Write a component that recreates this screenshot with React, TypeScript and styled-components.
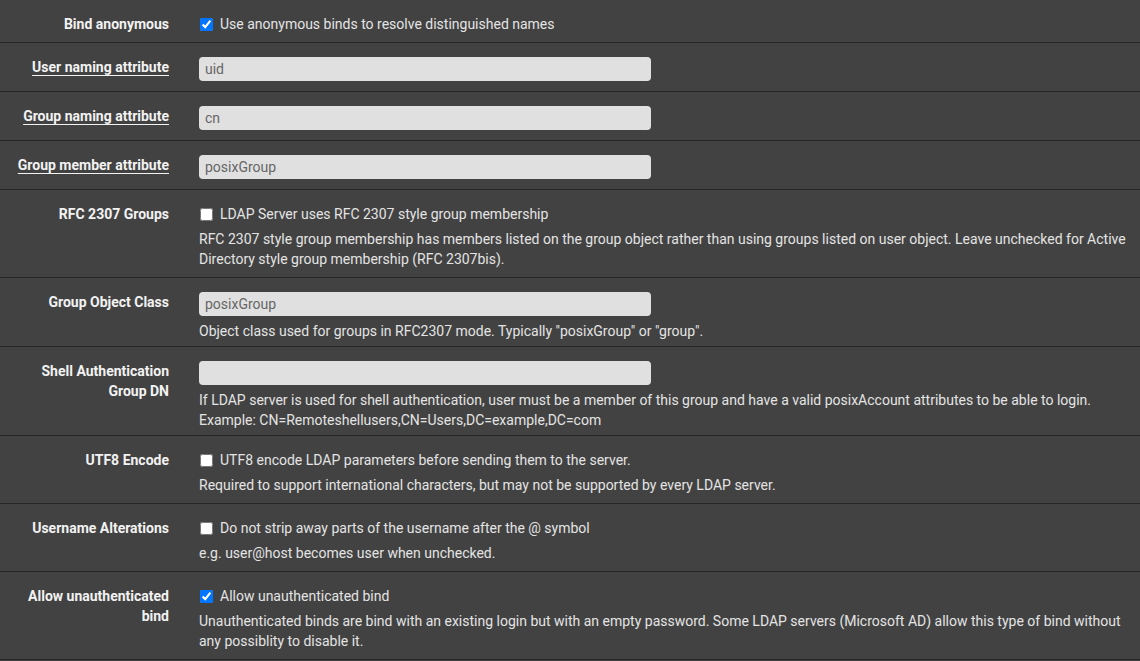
import React from "react";
import styled, { createGlobalStyle } from "styled-components";

const Global = createGlobalStyle`
  html, body { margin: 0; padding: 0; background: #424242; }
  body { font-family: Roboto, "Liberation Sans", Arial, sans-serif; font-size: 14px; line-height: 20px; color: #e4e4e4; }
  * { box-sizing: border-box; }
`;

const Form = styled.div`
  width: 1140px;
  background: #424242;
`;

const Row = styled.div<{ $pb: number }>`
  display: grid;
  grid-template-columns: 184px 1fr;
  padding: 14px 0 ${(p) => p.$pb}px;
  border-bottom: 1px solid #262626;
`;

const Label = styled.div<{ $link?: boolean }>`
  padding: 0 15px;
  text-align: right;
  font-weight: 700;
  color: #f2f2f2;
  text-decoration: ${(p) => (p.$link ? "underline" : "none")};
  text-underline-offset: 3px;
  text-decoration-thickness: 1px;
`;

const Content = styled.div`
  padding: 0 8px 0 15px;
`;

const TextInput = styled.input`
  display: block;
  width: 452px;
  height: 24px;
  margin: 0;
  padding: 0 6px;
  border: none;
  border-radius: 4px;
  background: #e0e0e0;
  color: #666666;
  font-family: Roboto, "Liberation Sans", Arial, sans-serif;
  font-size: 14px;
  outline: none;
`;

const CheckLine = styled.label`
  display: flex;
  align-items: center;
  height: 20px;
  color: #e4e4e4;
`;

const Box = styled.input`
  width: 13px;
  height: 13px;
  margin: 0 7px 0 1px;
  accent-color: #0075ff;
`;

const Help = styled.div`
  margin-top: 5px;
  color: #e4e4e4;
`;

type RowDef = {
  label: string;
  link?: boolean;
  input?: string;
  check?: { text: string; checked: boolean };
  help?: string;
  pb: number;
};

const rows: RowDef[] = [
  { label: "Bind anonymous", check: { text: "Use anonymous binds to resolve distinguished names", checked: true }, pb: 8 },
  { label: "User naming attribute", link: true, input: "uid", pb: 10 },
  { label: "Group naming attribute", link: true, input: "cn", pb: 10 },
  { label: "Group member attribute", link: true, input: "posixGroup", pb: 10 },
  {
    label: "RFC 2307 Groups",
    check: { text: "LDAP Server uses RFC 2307 style group membership", checked: false },
    help: "RFC 2307 style group membership has members listed on the group object rather than using groups listed on user object. Leave unchecked for Active Directory style group membership (RFC 2307bis).",
    pb: 8,
  },
  {
    label: "Group Object Class",
    input: "posixGroup",
    help: 'Object class used for groups in RFC2307 mode. Typically "posixGroup" or "group".',
    pb: 5,
  },
  {
    label: "Shell Authentication Group DN",
    input: "",
    help: "If LDAP server is used for shell authentication, user must be a member of this group and have a valid posixAccount attributes to be able to login. Example: CN=Remoteshellusers,CN=Users,DC=example,DC=com",
    pb: 5,
  },
  {
    label: "UTF8 Encode",
    check: { text: "UTF8 encode LDAP parameters before sending them to the server.", checked: false },
    help: "Required to support international characters, but may not be supported by every LDAP server.",
    pb: 8,
  },
  {
    label: "Username Alterations",
    check: { text: "Do not strip away parts of the username after the @ symbol", checked: false },
    help: "e.g. user@host becomes user when unchecked.",
    pb: 8,
  },
  {
    label: "Allow unauthenticated bind",
    check: { text: "Allow unauthenticated bind", checked: true },
    help: "Unauthenticated binds are bind with an existing login but with an empty password. Some LDAP servers (Microsoft AD) allow this type of bind without any possiblity to disable it.",
    pb: 8,
  },
];

export default function App() {
  return (
    <>
      <Global />
      <Form>
        {rows.map((r, i) => (
          <Row key={i} $pb={r.pb}>
            <Label $link={r.link}>{r.label}</Label>
            <Content>
              {r.input !== undefined && <TextInput defaultValue={r.input} />}
              {r.check && (
                <CheckLine>
                  <Box type="checkbox" defaultChecked={r.check.checked} />
                  {r.check.text}
                </CheckLine>
              )}
              {r.help && <Help>{r.help}</Help>}
            </Content>
          </Row>
        ))}
      </Form>
    </>
  );
}
